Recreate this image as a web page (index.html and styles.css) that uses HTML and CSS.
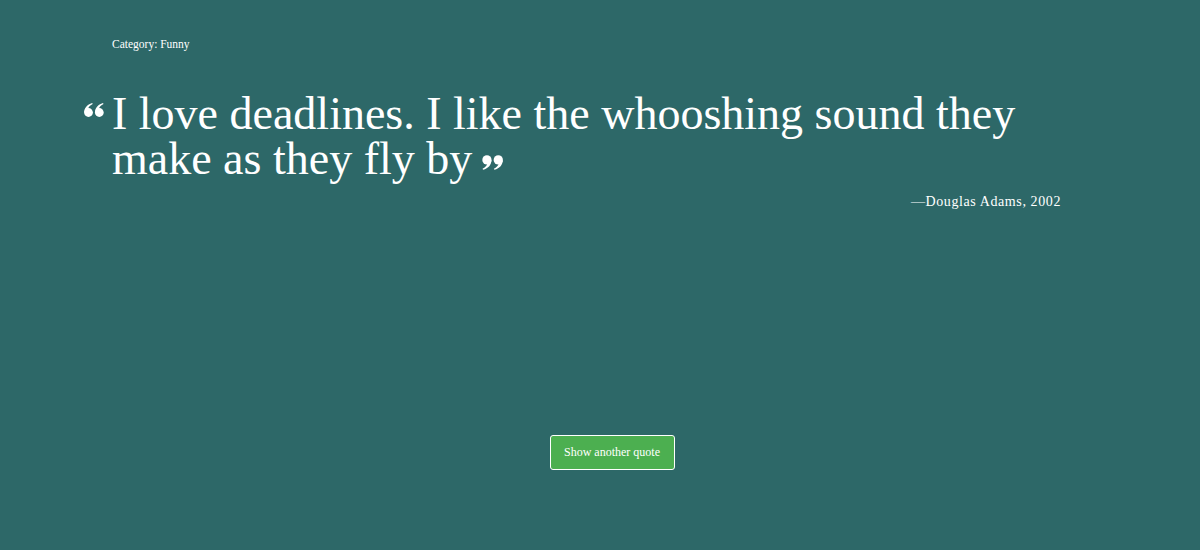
FILE: index.html
```html
<!DOCTYPE html>
<html lang="en">
<head>
<meta charset="utf-8">
<title>Quote</title>
<link rel="stylesheet" href="styles.css">
</head>
<body>
<main class="page">
  <p class="category">Category: Funny</p>
  <blockquote class="quote">
    <svg class="mark mark-open" viewBox="0 0 20 14" aria-hidden="true">
      <g fill="#fff">
        <circle cx="4.5" cy="9.5" r="4.4"/>
        <path d="M0.2 9.5 C0.2 5 3 1.6 8.2 0 L8.7 1.1 C5.6 2.6 4.2 4.6 4.2 6 Z"/>
        <circle cx="15.3" cy="9.5" r="4.4"/>
        <path d="M11 9.5 C11 5 13.8 1.6 19 0 L19.5 1.1 C16.4 2.6 15 4.6 15 6 Z"/>
      </g>
    </svg>
    <p class="text">I love deadlines. I like the whooshing sound they make as they fly by<svg class="mark mark-close" viewBox="0 0 20 14" aria-hidden="true">
      <g fill="#fff" transform="rotate(180 10 7)">
        <circle cx="4.5" cy="9.5" r="4.4"/>
        <path d="M0.2 9.5 C0.2 5 3 1.6 8.2 0 L8.7 1.1 C5.6 2.6 4.2 4.6 4.2 6 Z"/>
        <circle cx="15.3" cy="9.5" r="4.4"/>
        <path d="M11 9.5 C11 5 13.8 1.6 19 0 L19.5 1.1 C16.4 2.6 15 4.6 15 6 Z"/>
      </g>
    </svg></p>
    <footer class="author">—Douglas Adams, 2002</footer>
  </blockquote>
  <div class="actions">
    <button class="btn" type="button">Show another quote</button>
  </div>
</main>
</body>
</html>
```
FILE: styles.css
```css
html, body {
  margin: 0;
  padding: 0;
  height: 100%;
}
body {
  background: #2d6868;
  color: #fff;
  font-family: "Liberation Serif", "Times New Roman", serif;
}
.page {
  width: 1000px;
  margin-left: 112px;
  padding-top: 36px;
}
.category {
  margin: 0;
  font-size: 11.5px;
  line-height: 16px;
}
.quote {
  position: relative;
  margin: 39px 0 0 0;
  width: 949px;
}
.text {
  margin: 0;
  font-size: 46px;
  line-height: 45px;
}
.mark {
  width: 20px;
  height: 14px;
}
.mark-open {
  position: absolute;
  left: -28px;
  top: 12px;
}
.mark-close {
  display: inline-block;
  margin-left: 10px;
  vertical-align: 4px;
  width: 21px;
  height: 15px;
}
.author {
  display: block;
  margin-top: 11px;
  text-align: right;
  font-size: 14px;
  line-height: 20px;
  letter-spacing: 0.6px;
}
.actions {
  display: flex;
  justify-content: center;
  margin-top: 223px;
}
.btn {
  width: 125px;
  height: 35px;
  background: #4caf50;
  color: #fff;
  border: 1.5px solid #fff;
  border-radius: 3px;
  font-family: "Liberation Serif", "Times New Roman", serif;
  font-size: 12px;
  padding: 0;
  cursor: pointer;
}
```
